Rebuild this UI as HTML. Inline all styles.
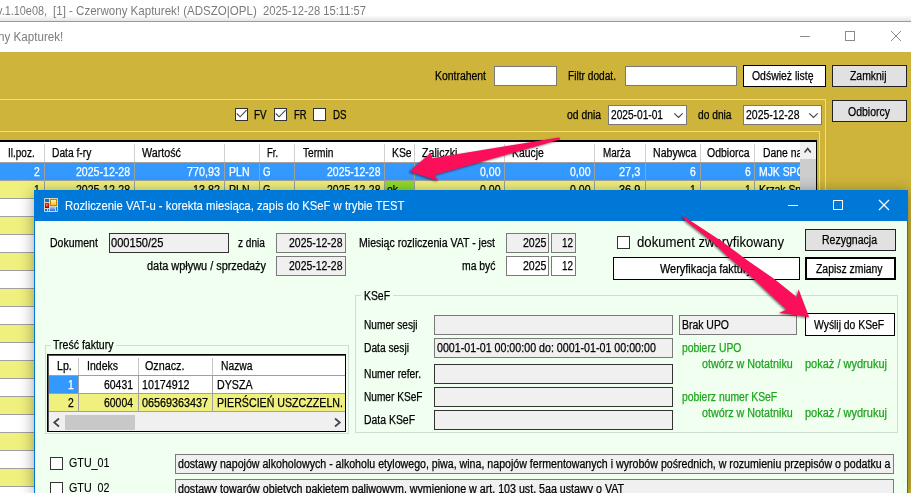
<!DOCTYPE html>
<html><head><meta charset="utf-8"><title>Czerwony Kapturek</title>
<style>
html,body{margin:0;padding:0;width:911px;height:493px;overflow:hidden;}
body{position:relative;background:#ceb43b;font-family:"Liberation Sans", sans-serif;}
#w{position:absolute;left:0;top:0;width:911px;height:493px;overflow:hidden;background:#ceb43b;}
.b{position:absolute;box-sizing:border-box;}
.t{position:absolute;white-space:pre;line-height:1;transform-origin:0 0;font-size:12px;color:#000;-webkit-text-stroke:0.25px;}
svg{position:absolute;overflow:visible;}
</style></head>
<body>
<div id="w">
<div class="b" style="left:0px;top:0px;width:911px;height:21px;background:#fff;"></div>
<div class="b" style="left:0px;top:15px;width:911px;height:6px;background:linear-gradient(#fff,#e4e4e4);"></div>
<div class="b" style="left:0px;top:21px;width:911px;height:1px;background:#9a9a9a;"></div>
<span class="t" id="t0" style="left:-3.5px;top:4px;font-size:13px;color:#7b7b7b;-webkit-text-stroke:0px;transform:scaleX(0.837);">v.1.10e08,</span>
<span class="t" id="t1" style="left:53.3px;top:4px;font-size:13px;color:#7b7b7b;-webkit-text-stroke:0px;transform:scaleX(0.888);">[1] - Czerwony Kapturek! (ADSZO|OPL)</span>
<span class="t" id="t2" style="left:263.0px;top:4px;font-size:13px;color:#7b7b7b;-webkit-text-stroke:0px;transform:scaleX(0.860);">2025-12-28 15:11:57</span>
<div class="b" style="left:0px;top:22px;width:911px;height:30px;background:#fff;"></div>
<span class="t" id="t3" style="left:-2.5px;top:31px;color:#7c7c7c;-webkit-text-stroke:0px;transform:scaleX(0.969);">ny Kapturek!</span>
<div class="b" style="left:800px;top:36px;width:10px;height:1px;background:#8a8a8a;"></div>
<div class="b" style="left:845px;top:31px;width:10px;height:10px;border:1px solid #8a8a8a;"></div>
<svg style="left:891px;top:31px" width="10" height="10"><path d="M0,0L10,10M10,0L0,10" stroke="#8a8a8a" stroke-width="1" fill="none"/></svg>
<div class="b" style="left:0px;top:99px;width:826px;height:1px;background:#e6dca0;"></div>
<div class="b" style="left:825px;top:99px;width:1px;height:100px;background:#e6dca0;"></div>
<div class="b" style="left:0px;top:131px;width:820px;height:1px;background:#e6dca0;"></div>
<div class="b" style="left:819px;top:131px;width:1px;height:70px;background:#e6dca0;"></div>
<span class="t" id="t4" style="left:435.0px;top:70px;transform:scaleX(0.869);">Kontrahent</span>
<div class="b" style="left:494px;top:66px;width:63px;height:20px;background:#fff;border:1px solid #7a7a7a;"></div>
<span class="t" id="t5" style="left:568.0px;top:70px;transform:scaleX(0.847);">Filtr dodat.</span>
<div class="b" style="left:625px;top:66px;width:112px;height:20px;background:#fff;border:1px solid #7a7a7a;"></div>
<div class="b" style="left:743px;top:65px;width:83px;height:22px;background:#fff;border:1px solid #000;"></div>
<span class="t" id="t6" style="left:752.0px;top:70px;transform:scaleX(0.870);">Odśwież listę</span>
<div class="b" style="left:832px;top:65px;width:75px;height:22px;background:#e1e1e1;border:1px solid #222;"></div>
<span class="t" id="t7" style="left:850.0px;top:70px;transform:scaleX(0.869);">Zamknij</span>
<div class="b" style="left:832px;top:100px;width:75px;height:22px;background:#e1e1e1;border:1px solid #222;"></div>
<span class="t" id="t8" style="left:847.5px;top:106px;transform:scaleX(0.874);">Odbiorcy</span>
<div class="b" style="left:235px;top:108px;width:13px;height:13px;background:#fff;border:1px solid #333;"></div>
<svg style="left:235px;top:108px" width="13" height="13"><path d="M1.7,5.5L5.1,8.8L11.6,2.2" stroke="#484848" stroke-width="1.15" fill="none"/></svg>
<span class="t" id="t9" style="left:254.2px;top:109px;transform:scaleX(0.815);">FV</span>
<div class="b" style="left:274px;top:108px;width:13px;height:13px;background:#fff;border:1px solid #333;"></div>
<svg style="left:274px;top:108px" width="13" height="13"><path d="M1.7,5.5L5.1,8.8L11.6,2.2" stroke="#484848" stroke-width="1.15" fill="none"/></svg>
<span class="t" id="t10" style="left:293.5px;top:109px;transform:scaleX(0.781);">FR</span>
<div class="b" style="left:313px;top:108px;width:13px;height:13px;background:#fff;border:1px solid #333;"></div>
<span class="t" id="t11" style="left:332.5px;top:109px;transform:scaleX(0.810);">DS</span>
<span class="t" id="t12" style="left:566.5px;top:109px;transform:scaleX(0.863);">od dnia</span>
<div class="b" style="left:608px;top:105px;width:79px;height:20px;background:#fff;border:1px solid #7a7a7a;"></div>
<span class="t" id="t13" style="left:611.0px;top:109px;transform:scaleX(0.847);">2025-01-01</span>
<svg style="left:674px;top:113px" width="9" height="5"><path d="M0.3,0.3L4.5,4.5L8.7,0.3" stroke="#444" stroke-width="1.1" fill="none"/></svg>
<span class="t" id="t14" style="left:698.0px;top:109px;transform:scaleX(0.851);">do dnia</span>
<div class="b" style="left:743px;top:105px;width:79px;height:20px;background:#fff;border:1px solid #7a7a7a;"></div>
<span class="t" id="t15" style="left:745.5px;top:109px;transform:scaleX(0.871);">2025-12-28</span>
<svg style="left:809px;top:113px" width="9" height="5"><path d="M0.3,0.3L4.5,4.5L8.7,0.3" stroke="#444" stroke-width="1.1" fill="none"/></svg>
<div class="b" style="left:0px;top:140px;width:817px;height:2px;background:#000;"></div>
<div class="b" style="left:816px;top:140px;width:1px;height:60px;background:#000;"></div>
<div class="b" style="left:0px;top:142px;width:816px;height:20px;background:#fff;"></div>
<div class="b" style="left:0px;top:162px;width:816px;height:1px;background:#a0a0a0;"></div>
<div class="b" style="left:0px;top:163px;width:800px;height:17px;background:#3399ff;"></div>
<div class="b" style="left:0px;top:180px;width:800px;height:1px;background:#a0a0a0;"></div>
<div class="b" style="left:0px;top:181px;width:800px;height:17px;background:#f0f07e;"></div>
<div class="b" style="left:0px;top:198px;width:800px;height:1px;background:#a0a0a0;"></div>
<div class="b" style="left:0px;top:199px;width:800px;height:17px;background:#fff;"></div>
<div class="b" style="left:0px;top:216px;width:800px;height:1px;background:#a0a0a0;"></div>
<div class="b" style="left:0px;top:217px;width:800px;height:17px;background:#f0f07e;"></div>
<div class="b" style="left:0px;top:234px;width:800px;height:1px;background:#a0a0a0;"></div>
<div class="b" style="left:0px;top:235px;width:800px;height:17px;background:#fff;"></div>
<div class="b" style="left:0px;top:252px;width:800px;height:1px;background:#a0a0a0;"></div>
<div class="b" style="left:0px;top:253px;width:800px;height:17px;background:#f0f07e;"></div>
<div class="b" style="left:0px;top:270px;width:800px;height:1px;background:#a0a0a0;"></div>
<div class="b" style="left:0px;top:271px;width:800px;height:17px;background:#fff;"></div>
<div class="b" style="left:0px;top:288px;width:800px;height:1px;background:#a0a0a0;"></div>
<div class="b" style="left:0px;top:289px;width:800px;height:17px;background:#f0f07e;"></div>
<div class="b" style="left:0px;top:306px;width:800px;height:1px;background:#a0a0a0;"></div>
<div class="b" style="left:0px;top:307px;width:800px;height:17px;background:#fff;"></div>
<div class="b" style="left:0px;top:324px;width:800px;height:1px;background:#a0a0a0;"></div>
<div class="b" style="left:0px;top:325px;width:800px;height:17px;background:#f0f07e;"></div>
<div class="b" style="left:0px;top:342px;width:800px;height:1px;background:#a0a0a0;"></div>
<div class="b" style="left:0px;top:343px;width:800px;height:17px;background:#fff;"></div>
<div class="b" style="left:0px;top:360px;width:800px;height:1px;background:#a0a0a0;"></div>
<div class="b" style="left:0px;top:361px;width:800px;height:17px;background:#f0f07e;"></div>
<div class="b" style="left:0px;top:378px;width:800px;height:1px;background:#a0a0a0;"></div>
<div class="b" style="left:0px;top:379px;width:800px;height:17px;background:#fff;"></div>
<div class="b" style="left:0px;top:396px;width:800px;height:1px;background:#a0a0a0;"></div>
<div class="b" style="left:0px;top:397px;width:800px;height:17px;background:#f0f07e;"></div>
<div class="b" style="left:0px;top:414px;width:800px;height:1px;background:#a0a0a0;"></div>
<div class="b" style="left:0px;top:415px;width:800px;height:17px;background:#fff;"></div>
<div class="b" style="left:0px;top:432px;width:800px;height:1px;background:#a0a0a0;"></div>
<div class="b" style="left:0px;top:433px;width:800px;height:17px;background:#f0f07e;"></div>
<div class="b" style="left:0px;top:450px;width:800px;height:1px;background:#a0a0a0;"></div>
<div class="b" style="left:0px;top:451px;width:800px;height:17px;background:#fff;"></div>
<div class="b" style="left:0px;top:468px;width:800px;height:1px;background:#a0a0a0;"></div>
<div class="b" style="left:0px;top:469px;width:800px;height:17px;background:#f0f07e;"></div>
<div class="b" style="left:0px;top:486px;width:800px;height:1px;background:#a0a0a0;"></div>
<div class="b" style="left:0px;top:487px;width:800px;height:17px;background:#fff;"></div>
<div class="b" style="left:0px;top:504px;width:800px;height:1px;background:#a0a0a0;"></div>
<div class="b" style="left:385px;top:181px;width:29px;height:17px;background:#8fdc2a;"></div>
<div class="b" style="left:44px;top:144px;width:1px;height:18px;background:#d0d0d0;"></div>
<div class="b" style="left:44px;top:162px;width:1px;height:38px;background:#a0a0a0;"></div>
<div class="b" style="left:134px;top:144px;width:1px;height:18px;background:#d0d0d0;"></div>
<div class="b" style="left:134px;top:162px;width:1px;height:38px;background:#a0a0a0;"></div>
<div class="b" style="left:224px;top:144px;width:1px;height:18px;background:#d0d0d0;"></div>
<div class="b" style="left:224px;top:162px;width:1px;height:38px;background:#a0a0a0;"></div>
<div class="b" style="left:259px;top:144px;width:1px;height:18px;background:#d0d0d0;"></div>
<div class="b" style="left:259px;top:162px;width:1px;height:38px;background:#a0a0a0;"></div>
<div class="b" style="left:294px;top:144px;width:1px;height:18px;background:#d0d0d0;"></div>
<div class="b" style="left:294px;top:162px;width:1px;height:38px;background:#a0a0a0;"></div>
<div class="b" style="left:384px;top:144px;width:1px;height:18px;background:#d0d0d0;"></div>
<div class="b" style="left:384px;top:162px;width:1px;height:38px;background:#a0a0a0;"></div>
<div class="b" style="left:414px;top:144px;width:1px;height:18px;background:#d0d0d0;"></div>
<div class="b" style="left:414px;top:162px;width:1px;height:38px;background:#a0a0a0;"></div>
<div class="b" style="left:504px;top:144px;width:1px;height:18px;background:#d0d0d0;"></div>
<div class="b" style="left:504px;top:162px;width:1px;height:38px;background:#a0a0a0;"></div>
<div class="b" style="left:594px;top:144px;width:1px;height:18px;background:#d0d0d0;"></div>
<div class="b" style="left:594px;top:162px;width:1px;height:38px;background:#a0a0a0;"></div>
<div class="b" style="left:645px;top:144px;width:1px;height:18px;background:#d0d0d0;"></div>
<div class="b" style="left:645px;top:162px;width:1px;height:38px;background:#a0a0a0;"></div>
<div class="b" style="left:700px;top:144px;width:1px;height:18px;background:#d0d0d0;"></div>
<div class="b" style="left:700px;top:162px;width:1px;height:38px;background:#a0a0a0;"></div>
<div class="b" style="left:754px;top:144px;width:1px;height:18px;background:#d0d0d0;"></div>
<div class="b" style="left:754px;top:162px;width:1px;height:38px;background:#a0a0a0;"></div>
<div class="b" style="left:800px;top:142px;width:16px;height:58px;background:#cdcdcd;"></div>
<div class="b" style="left:800px;top:142px;width:16px;height:17px;background:#f0f0f0;"></div>
<svg style="left:804px;top:147px" width="8" height="6"><path d="M0.6,5.4L3.7,1.6L6.8,5.4" stroke="#404040" stroke-width="1.6" fill="none"/></svg>
<span class="t" id="t16" style="left:7.5px;top:147px;transform:scaleX(0.834);">Il.poz.</span>
<span class="t" id="t17" style="left:52.2px;top:147px;transform:scaleX(0.854);">Data f-ry</span>
<span class="t" id="t18" style="left:142.0px;top:147px;transform:scaleX(0.895);">Wartość</span>
<span class="t" id="t19" style="left:267.0px;top:147px;transform:scaleX(0.786);">Fr.</span>
<span class="t" id="t20" style="left:302.5px;top:147px;transform:scaleX(0.847);">Termin</span>
<div class="b" style="left:385px;top:143px;width:26px;height:19px;overflow:hidden;"><span class="t" id="t21" style="left:7.0px;top:4px;transform:scaleX(0.865);">KSeF</span></div>
<span class="t" id="t22" style="left:422.0px;top:147px;transform:scaleX(0.887);">Zaliczki</span>
<span class="t" id="t23" style="left:512.0px;top:147px;transform:scaleX(0.864);">Kaucje</span>
<span class="t" id="t24" style="left:602.5px;top:147px;transform:scaleX(0.825);">Marża</span>
<span class="t" id="t25" style="left:652.5px;top:147px;transform:scaleX(0.881);">Nabywca</span>
<span class="t" id="t26" style="left:706.5px;top:147px;transform:scaleX(0.873);">Odbiorca</span>
<div class="b" style="left:755px;top:143px;width:45px;height:19px;overflow:hidden;"><span class="t" id="t27" style="left:8.0px;top:4px;transform:scaleX(0.865);">Dane nabywcy</span></div>
<span class="t" id="t28" style="left:34.2px;top:166px;color:#fff;transform:scaleX(0.865);">2</span>
<span class="t" id="t29" style="left:76.0px;top:166px;color:#fff;transform:scaleX(0.880);">2025-12-28</span>
<span class="t" id="t30" style="left:187.0px;top:166px;color:#fff;transform:scaleX(0.899);">770,93</span>
<span class="t" id="t31" style="left:228.5px;top:166px;color:#fff;transform:scaleX(0.878);">PLN</span>
<span class="t" id="t32" style="left:262.5px;top:166px;color:#fff;transform:scaleX(0.803);">G</span>
<span class="t" id="t33" style="left:326.5px;top:166px;color:#fff;transform:scaleX(0.871);">2025-12-28</span>
<span class="t" id="t34" style="left:479.5px;top:166px;color:#fff;transform:scaleX(0.878);">0,00</span>
<span class="t" id="t35" style="left:569.5px;top:166px;color:#fff;transform:scaleX(0.878);">0,00</span>
<span class="t" id="t36" style="left:619.0px;top:166px;color:#fff;transform:scaleX(0.916);">27,3</span>
<span class="t" id="t37" style="left:689.7px;top:166px;color:#fff;transform:scaleX(0.865);">6</span>
<span class="t" id="t38" style="left:744.7px;top:166px;color:#fff;transform:scaleX(0.865);">6</span>
<div class="b" style="left:755px;top:163px;width:45px;height:17px;overflow:hidden;"><span class="t" id="t39" style="left:3.6px;top:3px;color:#fff;transform:scaleX(0.865);">MJK SPÓŁKA</span></div>
<span class="t" id="t40" style="left:34.2px;top:184px;transform:scaleX(0.865);">1</span>
<span class="t" id="t41" style="left:76.0px;top:184px;transform:scaleX(0.880);">2025-12-28</span>
<span class="t" id="t42" style="left:193.0px;top:184px;transform:scaleX(0.899);">13,82</span>
<span class="t" id="t43" style="left:228.5px;top:184px;transform:scaleX(0.878);">PLN</span>
<span class="t" id="t44" style="left:262.5px;top:184px;transform:scaleX(0.803);">G</span>
<span class="t" id="t45" style="left:326.5px;top:184px;transform:scaleX(0.871);">2025-12-28</span>
<span class="t" id="t46" style="left:387.0px;top:184px;transform:scaleX(0.865);">ok</span>
<span class="t" id="t47" style="left:479.5px;top:184px;transform:scaleX(0.878);">0,00</span>
<span class="t" id="t48" style="left:569.5px;top:184px;transform:scaleX(0.878);">0,00</span>
<span class="t" id="t49" style="left:619.0px;top:184px;transform:scaleX(0.916);">36,9</span>
<span class="t" id="t50" style="left:689.7px;top:184px;transform:scaleX(0.865);">1</span>
<span class="t" id="t51" style="left:744.7px;top:184px;transform:scaleX(0.865);">1</span>
<div class="b" style="left:755px;top:181px;width:45px;height:17px;overflow:hidden;"><span class="t" id="t52" style="left:3.6px;top:3px;transform:scaleX(0.865);">Krzak Sp</span></div>
<svg style="left:0;top:0;filter:drop-shadow(-1px 1.5px 1.2px rgba(0,0,0,0.55));" width="911" height="493"><path d="M409.6,171.6L430.9,152.7L432.4,158.3L558.9,137.5Q560.6,137.8 560,139.6L434.5,175L438.5,181.1Z" fill="#fb0f5a"/></svg>
<div class="b" style="left:34px;top:190px;width:874px;height:303px;background:#0078d7;box-shadow:0 2px 14px rgba(0,0,0,0.38);"></div>
<div class="b" style="left:35px;top:221px;width:872px;height:272px;background:#f0fff0;"></div>
<svg style="left:44px;top:198px" width="14" height="14" viewBox="0 0 14 14">
<defs><linearGradient id="gy" x1="0" y1="0" x2="0" y2="1"><stop offset="0" stop-color="#fff0a0"/><stop offset="1" stop-color="#ffc820"/></linearGradient>
<linearGradient id="gr" x1="0" y1="0" x2="0" y2="1"><stop offset="0" stop-color="#e02020"/><stop offset="1" stop-color="#900808"/></linearGradient>
<linearGradient id="gb" x1="0" y1="0" x2="0" y2="1"><stop offset="0" stop-color="#a8c4ff"/><stop offset="1" stop-color="#3c64d8"/></linearGradient></defs>
<path d="M0.5,0.5H13.5V13.5H0.5ZM5.5,0.5V13.5M0.5,4.5H5.5M0.5,10.5H5.5M5.5,8.5H13.5M3.5,10.5V13.5M11.5,8.5V13.5" stroke="#dcd2c0" fill="none"/>
<rect x="6" y="1" width="7" height="7" fill="#b4860c"/><rect x="7" y="2" width="5" height="5" fill="url(#gy)"/>
<rect x="1" y="5" width="4" height="5" fill="url(#gr)"/><rect x="2" y="6" width="1.6" height="2.4" fill="#ff8a80" opacity="0.8"/>
<rect x="6" y="9" width="5" height="4" fill="url(#gb)"/>
</svg>
<span class="t" id="t53" style="left:64.6px;top:199px;font-size:13px;color:#fff;-webkit-text-stroke:0.1px;transform:scaleX(0.870);">Rozliczenie VAT-u - korekta miesiąca, zapis do KSeF w trybie TEST</span>
<div class="b" style="left:788px;top:205px;width:10px;height:1px;background:#fff;"></div>
<div class="b" style="left:833px;top:200px;width:10px;height:10px;border:1px solid #fff;"></div>
<svg style="left:879px;top:200px" width="10" height="10"><path d="M0,0L10,10M10,0L0,10" stroke="#fff" stroke-width="1.2" fill="none"/></svg>
<span class="t" id="t54" style="left:50.3px;top:237px;transform:scaleX(0.874);">Dokument</span>
<div class="b" style="left:109px;top:233px;width:120px;height:20px;background:#f0f0f0;border:1px solid #333;"></div>
<span class="t" id="t55" style="left:111.3px;top:237px;transform:scaleX(0.925);">000150/25</span>
<span class="t" id="t56" style="left:238.0px;top:237px;transform:scaleX(0.843);">z dnia</span>
<div class="b" style="left:276px;top:233px;width:70px;height:20px;background:#f0f0f0;border:1px solid #7a7a7a;"></div>
<span class="t" id="t57" style="left:289.0px;top:237px;transform:scaleX(0.871);">2025-12-28</span>
<span class="t" id="t58" style="left:146.5px;top:260px;transform:scaleX(0.910);">data wpływu / sprzedaży</span>
<div class="b" style="left:276px;top:256px;width:70px;height:20px;background:#f0f0f0;border:1px solid #7a7a7a;"></div>
<span class="t" id="t59" style="left:289.0px;top:260px;transform:scaleX(0.871);">2025-12-28</span>
<span class="t" id="t60" style="left:359.0px;top:237px;transform:scaleX(0.879);">Miesiąc rozliczenia VAT - jest</span>
<div class="b" style="left:506px;top:233px;width:43px;height:20px;background:#f0f0f0;border:1px solid #7a7a7a;"></div>
<span class="t" id="t61" style="left:522.5px;top:237px;transform:scaleX(0.880);">2025</span>
<div class="b" style="left:551px;top:233px;width:25px;height:20px;background:#f0f0f0;border:1px solid #7a7a7a;"></div>
<span class="t" id="t62" style="left:562.0px;top:237px;transform:scaleX(0.823);">12</span>
<span class="t" id="t63" style="left:461.5px;top:260px;transform:scaleX(0.866);">ma być</span>
<div class="b" style="left:506px;top:256px;width:43px;height:20px;background:#fff;border:1px solid #7a7a7a;"></div>
<span class="t" id="t64" style="left:522.5px;top:260px;transform:scaleX(0.880);">2025</span>
<div class="b" style="left:551px;top:256px;width:25px;height:20px;background:#fff;border:1px solid #7a7a7a;"></div>
<span class="t" id="t65" style="left:562.0px;top:260px;transform:scaleX(0.823);">12</span>
<div class="b" style="left:617px;top:236px;width:13px;height:13px;background:#fff;border:1px solid #333;"></div>
<span class="t" id="t66" style="left:636.5px;top:235px;font-size:14px;-webkit-text-stroke:0.1px;transform:scaleX(0.940);">dokument zweryfikowany</span>
<div class="b" style="left:613px;top:257px;width:187px;height:23px;background:#fff;border:1px solid #000;"></div>
<span class="t" id="t67" style="left:660.0px;top:263px;transform:scaleX(0.910);">Weryfikacja faktury</span>
<div class="b" style="left:805px;top:229px;width:91px;height:22px;background:#e1e1e1;border:1px solid #222;"></div>
<span class="t" id="t68" style="left:821.5px;top:234px;transform:scaleX(0.877);">Rezygnacja</span>
<div class="b" style="left:805px;top:257px;width:91px;height:23px;background:#fff;border:2px solid #000;"></div>
<span class="t" id="t69" style="left:815.5px;top:263px;transform:scaleX(0.867);">Zapisz zmiany</span>
<div class="b" style="left:355px;top:295px;width:543px;height:138px;border:1px solid #d3dcd3;"></div>
<div class="b" style="left:361px;top:290px;width:32px;height:12px;background:#f0fff0;"></div>
<span class="t" id="t70" style="left:364.0px;top:290px;transform:scaleX(0.866);">KSeF</span>
<span class="t" id="t71" style="left:364.0px;top:319px;transform:scaleX(0.844);">Numer sesji</span>
<div class="b" style="left:434px;top:315px;width:239px;height:20px;background:#f0f0f0;border:1px solid #7a7a7a;"></div>
<div class="b" style="left:679px;top:315px;width:118px;height:20px;background:#f0f0f0;border:1px solid #7a7a7a;"></div>
<span class="t" id="t72" style="left:682.0px;top:319px;transform:scaleX(0.870);">Brak UPO</span>
<div class="b" style="left:805px;top:313px;width:90px;height:23px;background:#fff;border:1px solid #000;"></div>
<span class="t" id="t73" style="left:814.3px;top:319px;transform:scaleX(0.864);">Wyślij do KSeF</span>
<span class="t" id="t74" style="left:364.0px;top:342px;transform:scaleX(0.854);">Data sesji</span>
<div class="b" style="left:434px;top:338px;width:239px;height:20px;background:#f0f0f0;border:1px solid #7a7a7a;"></div>
<span class="t" id="t75" style="left:437.0px;top:342px;transform:scaleX(0.889);">0001-01-01 00:00:00 do: 0001-01-01 00:00:00</span>
<span class="t" id="t76" style="left:364.0px;top:368px;transform:scaleX(0.855);">Numer refer.</span>
<div class="b" style="left:434px;top:364px;width:239px;height:20px;background:#f0f0f0;border:1px solid #333;"></div>
<span class="t" id="t77" style="left:364.0px;top:391px;transform:scaleX(0.843);">Numer KSeF</span>
<div class="b" style="left:434px;top:387px;width:239px;height:20px;background:#f0f0f0;border:1px solid #333;"></div>
<span class="t" id="t78" style="left:364.0px;top:414px;transform:scaleX(0.869);">Data KSeF</span>
<div class="b" style="left:434px;top:410px;width:239px;height:20px;background:#f0f0f0;border:1px solid #333;"></div>
<span class="t" id="t79" style="left:681.6px;top:342px;color:#1fa51f;transform:scaleX(0.865);">pobierz UPO</span>
<span class="t" id="t80" style="left:701.6px;top:358px;color:#1fa51f;transform:scaleX(0.895);">otwórz w Notatniku</span>
<span class="t" id="t81" style="left:805.4px;top:358px;color:#1fa51f;transform:scaleX(0.917);">pokaż / wydrukuj</span>
<span class="t" id="t82" style="left:681.6px;top:391px;color:#1fa51f;transform:scaleX(0.865);">pobierz numer KSeF</span>
<span class="t" id="t83" style="left:701.6px;top:407px;color:#1fa51f;transform:scaleX(0.895);">otwórz w Notatniku</span>
<span class="t" id="t84" style="left:805.4px;top:407px;color:#1fa51f;transform:scaleX(0.917);">pokaż / wydrukuj</span>
<div class="b" style="left:45px;top:345px;width:304px;height:89px;border:1px solid #d3dcd3;"></div>
<div class="b" style="left:51px;top:340px;width:65px;height:12px;background:#f0fff0;"></div>
<span class="t" id="t85" style="left:53.3px;top:339px;transform:scaleX(0.878);">Treść faktury</span>
<div class="b" style="left:47px;top:354px;width:299px;height:78px;background:#000;"></div>
<div class="b" style="left:48px;top:355px;width:297px;height:76px;background:#555;"></div>
<div class="b" style="left:49px;top:356px;width:296px;height:75px;background:#fff;"></div>
<div class="b" style="left:49px;top:375px;width:296px;height:1px;background:#a0a0a0;"></div>
<div class="b" style="left:49px;top:376px;width:29px;height:17px;background:#3399ff;"></div>
<div class="b" style="left:49px;top:393px;width:296px;height:1px;background:#a0a0a0;"></div>
<div class="b" style="left:49px;top:394px;width:296px;height:17px;background:#f0f07e;"></div>
<div class="b" style="left:49px;top:411px;width:296px;height:1px;background:#a0a0a0;"></div>
<div class="b" style="left:78px;top:358px;width:1px;height:17px;background:#c4c4c4;"></div>
<div class="b" style="left:78px;top:375px;width:1px;height:36px;background:#a0a0a0;"></div>
<div class="b" style="left:138px;top:358px;width:1px;height:17px;background:#c4c4c4;"></div>
<div class="b" style="left:138px;top:375px;width:1px;height:36px;background:#a0a0a0;"></div>
<div class="b" style="left:212px;top:358px;width:1px;height:17px;background:#c4c4c4;"></div>
<div class="b" style="left:212px;top:375px;width:1px;height:36px;background:#a0a0a0;"></div>
<div class="b" style="left:49px;top:412px;width:296px;height:19px;background:#f0f0f0;"></div>
<div class="b" style="left:65px;top:415px;width:70px;height:15px;background:#c8c8c8;"></div>
<svg style="left:53px;top:418px" width="7" height="9"><path d="M6,0.5L1.2,4.5L6,8.5" stroke="#444" stroke-width="1.7" fill="none"/></svg>
<svg style="left:334px;top:418px" width="7" height="9"><path d="M1,0.5L5.8,4.5L1,8.5" stroke="#444" stroke-width="1.7" fill="none"/></svg>
<span class="t" id="t86" style="left:57.2px;top:360px;transform:scaleX(0.887);">Lp.</span>
<span class="t" id="t87" style="left:86.5px;top:360px;transform:scaleX(0.877);">Indeks</span>
<span class="t" id="t88" style="left:145.0px;top:360px;transform:scaleX(0.897);">Oznacz.</span>
<span class="t" id="t89" style="left:220.5px;top:360px;transform:scaleX(0.859);">Nazwa</span>
<span class="t" id="t90" style="left:68.2px;top:379px;color:#fff;transform:scaleX(0.865);">1</span>
<span class="t" id="t91" style="left:104.0px;top:379px;transform:scaleX(0.869);">60431</span>
<span class="t" id="t92" style="left:142.0px;top:379px;transform:scaleX(0.890);">10174912</span>
<span class="t" id="t93" style="left:216.5px;top:379px;transform:scaleX(0.887);">DYSZA</span>
<span class="t" id="t94" style="left:68.2px;top:397px;transform:scaleX(0.865);">2</span>
<span class="t" id="t95" style="left:104.0px;top:397px;transform:scaleX(0.869);">60004</span>
<span class="t" id="t96" style="left:142.0px;top:397px;transform:scaleX(0.899);">06569363437</span>
<span class="t" id="t97" style="left:216.5px;top:397px;transform:scaleX(0.887);">PIERŚCIEŃ USZCZZELN.</span>
<div class="b" style="left:50px;top:457px;width:13px;height:13px;background:#fff;border:1px solid #333;"></div>
<span class="t" id="t98" style="left:68.5px;top:457px;-webkit-text-stroke:0.1px;transform:scaleX(0.893);">GTU_01</span>
<div class="b" style="left:175px;top:454px;width:719px;height:20px;background:#f0f0f0;border:1px solid #7a7a7a;"></div>
<span class="t" id="t99" style="left:177.5px;top:458px;transform:scaleX(0.885);">dostawy napojów alkoholowych - alkoholu etylowego, piwa, wina, napojów fermentowanych i wyrobów pośrednich, w rozumieniu przepisów o podatku a</span>
<div class="b" style="left:50px;top:482px;width:13px;height:13px;background:#fff;border:1px solid #333;"></div>
<span class="t" id="t100" style="left:68.5px;top:482px;-webkit-text-stroke:0.1px;transform:scaleX(0.893);">GTU_02</span>
<div class="b" style="left:175px;top:479px;width:719px;height:20px;background:#f0f0f0;border:1px solid #7a7a7a;"></div>
<span class="t" id="t101" style="left:177.5px;top:483px;transform:scaleX(0.889);">dostawy towarów objętych pakietem paliwowym, wymienione w art. 103 ust. 5aa ustawy o VAT</span>
<svg style="left:0;top:0;filter:drop-shadow(-1px 1.5px 1.2px rgba(0,0,0,0.55));" width="911" height="493"><path d="M682.2,215.2L690.1,220.5L722.4,241.8L747.2,260.2L774.3,279L796.7,296.9L798.6,289.3L809.2,317.3L779.5,312.7L786.4,309.8L753.2,278.5L729.7,258.2L712,241.5L685.2,220.5Z" fill="#fb0f5a"/></svg>
</div>
</body></html>
